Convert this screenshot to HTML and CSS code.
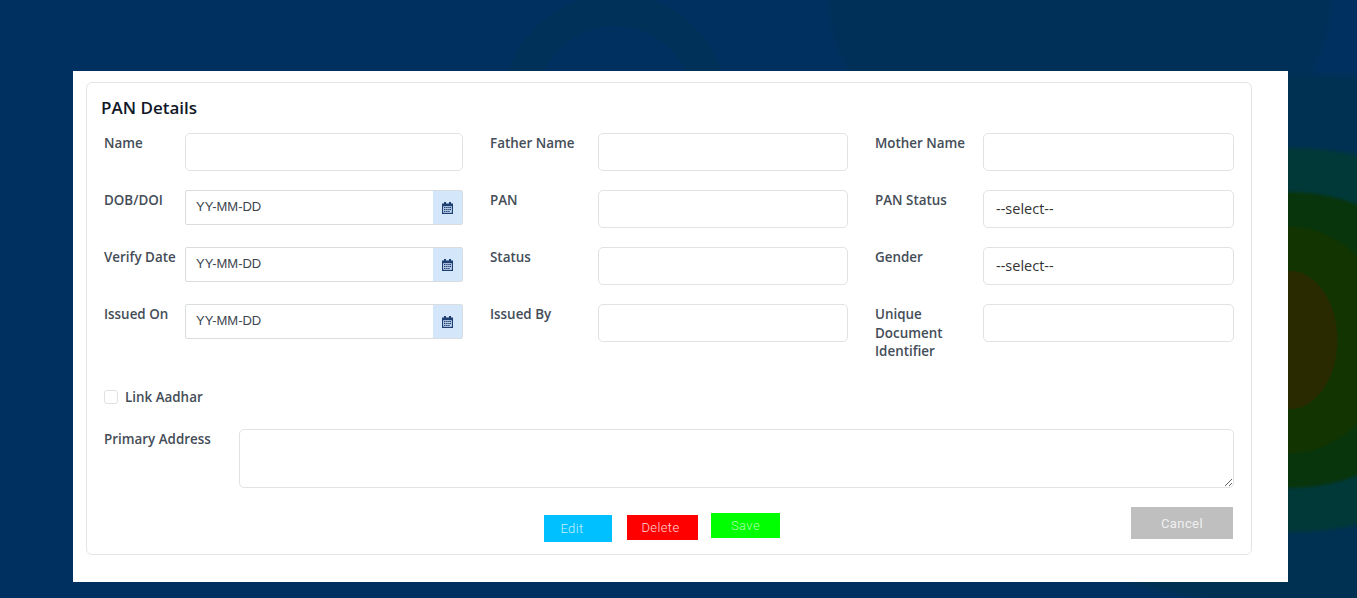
FILE: index.html
```html
<!DOCTYPE html>
<html lang="en">
	<head>
		<meta name="viewport" content="width=device-width, initial-scale=1" />
		<title>PAN Details</title>
		<link rel="stylesheet" href="styles.css">
	</head>
	<body>
		<div class="panel">
			<form class="card">
				<h3 class="card-title">PAN Details</h3>
				<div class="fields">
					<label class="field-label">Name</label>
					<input class="field" type="text" />
					<label class="field-label">Father Name</label>
					<input class="field" type="text" />
					<label class="field-label">Mother Name</label>
					<input class="field" type="text" />

					<label class="field-label">DOB/DOI</label>
					<div class="date-group">
						<span class="date-text">YY-MM-DD</span>
						<span class="date-btn">
							<svg width="11" height="12" viewBox="0 0 11 12"><path fill="#1d3f72" d="M2 0h2v1.500h3V0h2v1.500h2V12H0V1.500h2zM1.200 4.200v6.600h8.600V4.200z"/><path fill="#1d3f72" d="M2 5h1.500v1.300H2zM4.100 5h1.500v1.300H4.100zM6.200 5h1.500v1.300H6.200zM8 5h1v1.300H8zM2 7h1.500v1.300H2zM4.100 7h1.500v1.300H4.100zM6.200 7h1.500v1.300H6.200zM8 7h1v1.300H8zM2 9h1.500v1.100H2zM4.100 9h1.500v1.100H4.100zM6.200 9h1.500v1.100H6.200z"/></svg>
						</span>
					</div>
					<label class="field-label">PAN</label>
					<input class="field" type="text" />
					<label class="field-label">PAN Status</label>
					<div class="field select-box">--select--</div>

					<label class="field-label">Verify Date</label>
					<div class="date-group">
						<span class="date-text">YY-MM-DD</span>
						<span class="date-btn">
							<svg width="11" height="12" viewBox="0 0 11 12"><path fill="#1d3f72" d="M2 0h2v1.500h3V0h2v1.500h2V12H0V1.500h2zM1.200 4.200v6.600h8.600V4.200z"/><path fill="#1d3f72" d="M2 5h1.500v1.300H2zM4.100 5h1.500v1.300H4.100zM6.200 5h1.500v1.300H6.200zM8 5h1v1.300H8zM2 7h1.500v1.300H2zM4.100 7h1.500v1.300H4.100zM6.200 7h1.500v1.300H6.200zM8 7h1v1.300H8zM2 9h1.500v1.100H2zM4.100 9h1.500v1.100H4.100zM6.200 9h1.500v1.100H6.200z"/></svg>
						</span>
					</div>
					<label class="field-label">Status</label>
					<input class="field" type="text" />
					<label class="field-label">Gender</label>
					<div class="field select-box">--select--</div>

					<label class="field-label">Issued On</label>
					<div class="date-group">
						<span class="date-text">YY-MM-DD</span>
						<span class="date-btn">
							<svg width="11" height="12" viewBox="0 0 11 12"><path fill="#1d3f72" d="M2 0h2v1.500h3V0h2v1.500h2V12H0V1.500h2zM1.200 4.200v6.600h8.600V4.200z"/><path fill="#1d3f72" d="M2 5h1.500v1.300H2zM4.100 5h1.500v1.300H4.100zM6.200 5h1.500v1.300H6.200zM8 5h1v1.300H8zM2 7h1.500v1.300H2zM4.100 7h1.500v1.300H4.100zM6.200 7h1.500v1.300H6.200zM8 7h1v1.300H8zM2 9h1.500v1.100H2zM4.100 9h1.500v1.100H4.100zM6.200 9h1.500v1.100H6.200z"/></svg>
						</span>
					</div>
					<label class="field-label">Issued By</label>
					<input class="field" type="text" />
					<label class="field-label">Unique Document Identifier</label>
					<input class="field" type="text" />
				</div>

				<div class="check-row">
					<span class="check-box"></span>
					<label class="field-label">Link Aadhar</label>
				</div>

				<div class="address-row">
					<label class="field-label">Primary Address</label>
					<textarea class="field address"></textarea>
				</div>

				<div class="actions">
					<button type="button" class="btn btn-edit">Edit</button>
					<button type="button" class="btn btn-delete">Delete</button>
					<button type="button" class="btn btn-save">Save</button>
					<button type="button" class="btn btn-cancel">Cancel</button>
				</div>
			</form>
		</div>
	</body>
</html>
```

FILE: styles.css
```css
* {
	box-sizing: border-box;
}
html,
body {
	height: 100%;
}
body {
	margin: 0;
	padding: 71px 69px 16px 73px;
	overflow: hidden;
	color: #444d57;
	font: normal 14px "Open Sans", Arial, sans-serif;
	background-color: #003060;
	background-image:
		radial-gradient(48px 70px at 1290px 340px, #2a2a00 97%, transparent 100%),
		radial-gradient(100px 115px at 1290px 340px, #113400 97%, transparent 100%),
		radial-gradient(170px 150px at 1290px 340px, #08350c 97%, transparent 100%),
		radial-gradient(250px 195px at 1290px 340px, #013838 97%, transparent 100%),
		radial-gradient(420px 270px at 1300px 340px, #003152 97%, transparent 100%),
		radial-gradient(255px 190px at 1080px 0, #003058 97%, transparent 100%),
		radial-gradient(circle at 615px 105px, transparent 78px, #003158 80px, #003158 110px, transparent 112px);
}
.panel {
	height: 511px;
	width: 1215px;
	padding: 11px 36px 27px 13px;
	background: #fff;
}
.card {
	height: 473px;
	padding: 12px 17px 0 17px;
	border: 1px solid #e3e6e8;
	border-radius: 6px;
}
.card-title {
	margin: 0 0 12px -3px;
	height: 26px;
	color: #101828;
	font-size: 17px;
	font-weight: 600;
	line-height: 26px;
}
.fields {
	display: grid;
	grid-template-columns: 81px 278px 135px 250px 135px 251px;
	grid-auto-rows: 38px;
	row-gap: 19px;
}
.field-label {
	padding-top: 1px;
	color: #444d57;
	font-size: 13.4px;
	font-weight: 600;
	line-height: 18.5px;
}
.fields .field-label:nth-of-type(3n + 2),
.fields .field-label:nth-of-type(3n) {
	padding-left: 27px;
	padding-right: 10px;
}
.field {
	display: block;
	width: 100%;
	height: 38px;
	border: 1px solid #e0e3e6;
	border-radius: 5px;
	background: #fff;
}
.select-box {
	padding: 0 12px;
	color: #333;
	font-size: 14.5px;
	line-height: 36px;
}
.date-group {
	display: flex;
	height: 35px;
	border: 1px solid #d9dde0;
	border-radius: 2px;
}
.date-text {
	flex: 1;
	padding-left: 10px;
	color: #3d4650;
	font-family: "Liberation Sans", Arial, sans-serif;
	font-size: 13px;
	line-height: 31px;
}
.date-btn {
	display: flex;
	width: 29px;
	align-items: center;
	justify-content: center;
	background: #d4e6fa;
}
.check-row {
	display: flex;
	align-items: center;
	gap: 7px;
	height: 18px;
	margin-top: 46px;
}
.check-box {
	width: 14px;
	height: 14px;
	border: 1px solid #dfe2e5;
	border-radius: 3px;
}
.address-row {
	display: flex;
	margin-top: 23px;
}
.address-row .field-label {
	width: 135px;
	flex: none;
}
.address {
	height: 59px;
	width: 995px;
	flex: none;
	resize: both;
}
.actions {
	display: flex;
	align-items: flex-start;
	height: 48px;
	padding-left: 440px;
}
.btn {
	padding: 0;
	border: 0;
	color: #fff;
	font-family: Roboto, Arial, sans-serif;
	font-size: 13px;
	font-weight: 300;
	letter-spacing: 0.4px;
}
.btn-edit {
	width: 68px;
	height: 27px;
	margin-top: 27px;
	padding-right: 12px;
	background: #00c0ff;
	color: #c8f0ff;
}
.btn-delete {
	width: 71px;
	height: 25px;
	margin: 27px 0 0 15px;
	padding-right: 4px;
	background: #ff0000;
	color: #ffd8d8;
}
.btn-save {
	width: 69px;
	height: 25px;
	margin: 25px 0 0 13px;
	background: #00ff00;
	color: #b0ffb0;
}
.btn-cancel {
	width: 102px;
	height: 32px;
	margin: 19px 0 0 351px;
	background: #bfbfbf;
	font-weight: 400;
	color: #f0f0f0;
}
```
